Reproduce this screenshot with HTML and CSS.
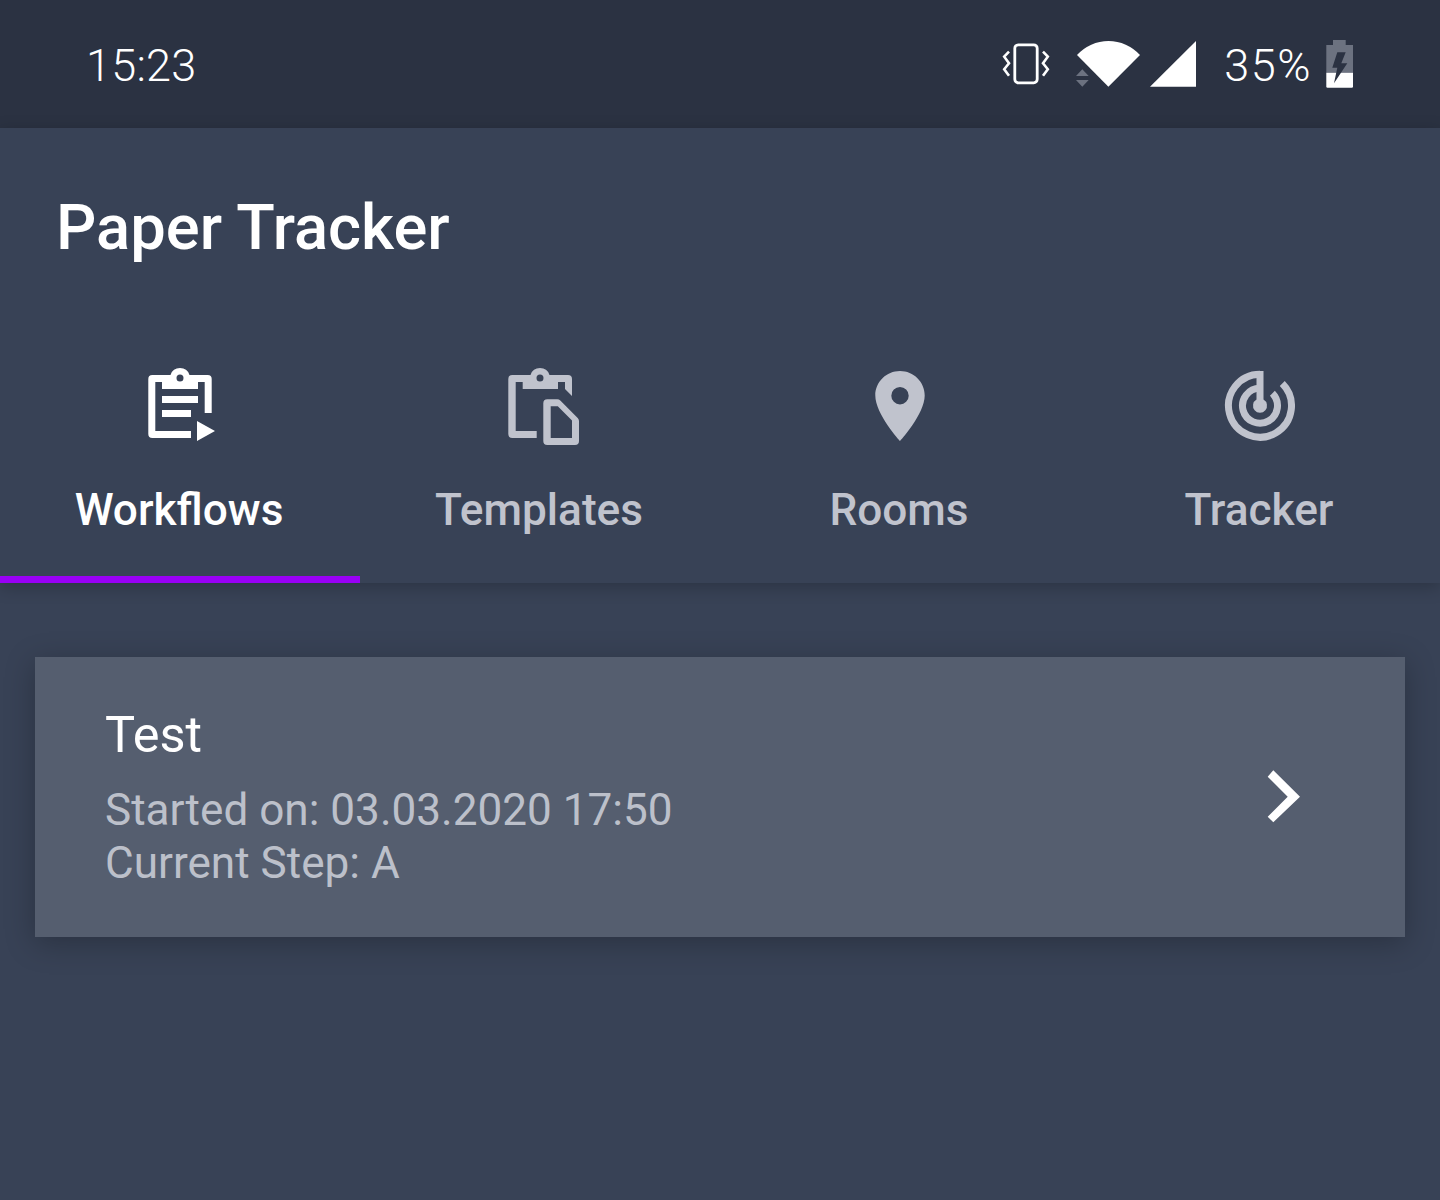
FILE: index.html
```html
<!DOCTYPE html>
<html lang="en">
<head>
	<meta charset="UTF-8">
	<title>Paper Tracker</title>
	<link rel="stylesheet" href="styles.css">
</head>
<body>
	<div class="status">
		<span class="clock">15:23</span>
		<div class="status-right">
			<svg class="status-icons" viewBox="1000 36 200 56" width="200" height="56">
				<rect x="1014.8" y="44.8" width="22.4" height="38" rx="3.5" fill="none" stroke="#fff" stroke-width="2.8"/>
				<path d="M1009 51.700L1004.200 56.700L1009 63.300L1004.200 69.300L1009 75.700M1043 51.700L1047.800 56.700L1043 63.300L1047.800 69.300L1043 75.700" fill="none" stroke="#fff" stroke-width="2.600"/>
				<path d="M1077 55A42.400 42.400 0 0 1 1140 55L1108.400 86.700z" fill="#fff"/>
				<path d="M1082.300 69.300L1088.700 76H1076zM1076 80H1088.700L1082.300 86.700z" fill="#6c7280"/>
				<path d="M1196 41V86.700H1150z" fill="#fff"/>
			</svg>
			<span class="percent">35%</span>
			<svg class="battery" viewBox="1326 38 30 52" width="30" height="52">
				<path d="M1334 40H1346.700V45H1354V72.700H1327.300V45H1334z" fill="#6c7280"/>
				<path d="M1327.300 72.700H1354V86.500Q1354 87.700 1352.800 87.700H1328.500Q1327.300 87.700 1327.300 86.500z" fill="#fff"/>
				<path d="M1338.300 52.300H1346.700L1342.300 63.300H1348.300L1335 83.300L1338.300 67.700H1333.300z" fill="#2b3242"/>
			</svg>
		</div>
	</div>

	<div class="appbar">
		<h1 class="title">Paper Tracker</h1>
		<div class="tabs">
			<div class="tab active">
				<svg class="tab-icon" viewBox="140 366 80 80" width="80" height="80">
					<path fill-rule="evenodd" d="M170.500 375A10 10 0 0 1 189.500 375H207.700Q211.700 375 211.700 379V413H204.700V382H198V389H162V382H155.300V431H191V438H152.300Q148.300 438 148.300 434V379Q148.300 375 152.300 375zM180 374.500A3.500 3.500 0 1 0 180 381.500A3.500 3.500 0 1 0 180 374.500z" fill="#fff"/>
					<path d="M162 396H198V403H162zM162 410H191V417H162zM197 421L215 431L197 441z" fill="#fff"/>
				</svg>
				<span>Workflows</span>
			</div>
			<div class="tab">
				<svg class="tab-icon" viewBox="500 366 80 80" width="80" height="80">
					<path fill-rule="evenodd" d="M530.500 375A10 10 0 0 1 549.500 375H568Q572 375 572 379V396L565 389V382H558V389H522.700V382H515.700V431H536.700V438H512.300Q508.300 438 508.300 434V379Q508.300 375 512.300 375zM540 374.500A3.500 3.500 0 1 0 540 381.500A3.500 3.500 0 1 0 540 374.500z" fill="#c0c3cd"/>
					<path fill-rule="evenodd" d="M547.300 399.300H557.300Q559 399.300 560.300 400.600L577.700 418Q579 419.300 579 421V441Q579 445 575 445H547.300Q543.300 445 543.300 441V403.300Q543.300 399.300 547.300 399.300zM550.700 406.300V438H572V420.500L557.800 406.300z" fill="#c0c3cd"/>
				</svg>
				<span>Templates</span>
			</div>
			<div class="tab">
				<svg class="tab-icon" viewBox="860 366 80 80" width="80" height="80">
					<path fill-rule="evenodd" d="M900 371C886.400 371 875.300 382 875.300 395.500C875.300 414 900 441 900 441S924.700 414 924.700 395.500C924.700 382 913.600 371 900 371zM900 387A8.700 8.700 0 1 1 900 404.400A8.700 8.700 0 1 1 900 387z" fill="#c0c3cd"/>
				</svg>
				<span>Rooms</span>
			</div>
			<div class="tab">
				<svg class="tab-icon" viewBox="1220 366 80 80" width="80" height="80">
					<path d="M1260 374.200A31.500 31.500 0 1 0 1282.270 383.430M1260 388.200A17.500 17.500 0 1 0 1272.370 393.330" fill="none" stroke="#c0c3cd" stroke-width="7"/>
					<path d="M1256.500 371H1263.500V399.600A7 7 0 1 1 1256.500 399.600z" fill="#c0c3cd"/>
				</svg>
				<span>Tracker</span>
			</div>
		</div>
	</div>

	<div class="content">
		<div class="card">
			<div class="card-text">
				<div class="card-name">Test</div>
				<div class="card-line">Started on: 03.03.2020 17:50</div>
				<div class="card-line card-step">Current Step: A</div>
			</div>
			<svg class="chevron" viewBox="1260 764 48 64" width="48" height="64">
				<path d="M1267.700 776.700L1273.300 770.300L1300 796.700L1273.300 822.300L1267.700 816.700L1287.700 796.700z" fill="#fff"/>
			</svg>
		</div>
	</div>
</body>
</html>
```

FILE: styles.css
```css
*{
	padding:0;
	margin:0;
	box-sizing:border-box;
}
body{
	width:1440px;
	height:1200px;
	overflow:hidden;
	background:#384256;
	font-family:Roboto,"Liberation Sans",sans-serif;
}
svg{
	display:block;
	flex:none;
}
.status{
	height:128px;
	padding:2px 85px 0 86px;
	background:#2b3242;
	display:flex;
	align-items:center;
	justify-content:space-between;
	color:#fff;
	font-size:45px;
	font-weight:300;
}
.status-right{
	display:flex;
	align-items:center;
}
.status-icons,
.battery{
	margin-top:-2px;
}
.percent{
	margin-left:24px;
	margin-right:13px;
	letter-spacing:1.5px;
}
.clock{
	letter-spacing:.25px;
}
.appbar{
	height:455px;
	position:relative;
	box-shadow:0 4px 16px rgba(0,0,0,.22);
	background:#384256;
}
.title{
	height:238px;
	padding:59px 0 0 56px;
	font-size:63.3px;
	line-height:80px;
	font-weight:500;
	color:#fff;
}
.tabs{
	display:flex;
	height:217px;
}
.tab{
	width:360px;
	display:flex;
	flex-direction:column;
	align-items:center;
	font-size:44.2px;
	line-height:50px;
	font-weight:500;
	color:#c0c3cd;
}
.tab span{
	margin:39px 2px 0 0;
}
.tab.active{
	color:#fff;
	border-bottom:7px solid #9900f5;
}
.content{
	padding:74px 35px 0;
}
.card{
	height:280px;
	background:#555e6f;
	box-shadow:0 6px 28px rgba(0,0,0,.25);
	display:flex;
	align-items:center;
	justify-content:space-between;
	padding:0 97px 0 70px;
}
.card-text{
	margin-top:3px;
}
.card-name{
	font-size:50.5px;
	line-height:56px;
	color:#fff;
	margin-bottom:20px;
}
.card-line{
	font-size:44.1px;
	line-height:54px;
	color:#bcc0ca;
}
.card-step{
	margin-top:-1px;
}
.chevron{
	margin-bottom:2px;
}
```
